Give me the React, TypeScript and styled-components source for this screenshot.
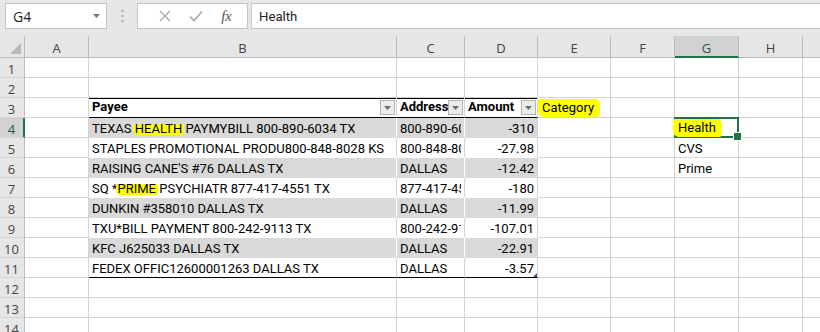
import React from "react";
import styled, { createGlobalStyle, css } from "styled-components";

const GlobalStyle = createGlobalStyle`
  html, body { margin: 0; padding: 0; }
  body { background: #e6e6e6; overflow: hidden; }
  * { box-sizing: border-box; }
`;

const GRID_LINE = "#d4d4d4";
const HEAD_LINE = "#bcbcbc";
const GREEN = "#217346";
const BAND = "#d9d9d9";
const CELL_FONT = `"Roboto", "Liberation Sans", sans-serif`;

const Window = styled.div`
  width: 820px;
  height: 332px;
  overflow: hidden;
  background: #e6e6e6;
  display: flex;
  flex-direction: column;
`;

const FormulaBar = styled.div`
  height: 36px;
  flex: none;
  display: flex;
  align-items: flex-start;
  padding: 3px 0 0 5px;
`;

const NameBox = styled.div`
  width: 102px;
  height: 26px;
  background: #fff;
  border: 1px solid #c6c6c6;
  display: flex;
  align-items: center;
  justify-content: space-between;
  padding: 0 6px 0 7px;
  font-family: "Open Sans", "Noto Sans", sans-serif;
  font-size: 14px;
  color: #222;
`;

const Grip = styled.div`
  width: 30px;
  height: 26px;
  display: flex;
  align-items: center;
  justify-content: center;
`;

const FxButtons = styled.div`
  width: 111px;
  height: 26px;
  background: #fff;
  border: 1px solid #c6c6c6;
  display: flex;
  align-items: center;
  padding: 0 8px 0 14px;
`;

const FxIconSlot = styled.div<{ $w: number }>`
  width: ${(p) => p.$w}px;
  height: 24px;
  display: flex;
  align-items: center;
  justify-content: center;
`;

const FxLabel = styled.span`
  font-family: "Liberation Serif", "DejaVu Serif", serif;
  font-style: italic;
  font-size: 15px;
  color: #555;
  letter-spacing: -0.5px;
`;

const FormulaInput = styled.div`
  flex: 1;
  height: 26px;
  margin-left: 3px;
  background: #fff;
  border: 1px solid #c6c6c6;
  border-right: none;
  display: flex;
  align-items: center;
  padding-left: 7px;
  font-family: ${CELL_FONT};
  font-size: 13.2px;
  color: #222;
`;

const Sheet = styled.div`
  flex: 1;
  display: grid;
  grid-template-columns: 25px 64px 308px 68px 73px 73px 64px 64px 64px 64px;
  grid-auto-rows: 20px;
  grid-template-rows: 22px;
  background: #fff;
  overflow: hidden;
`;

const Corner = styled.div`
  background: #e6e6e6;
  border-right: 1px solid ${HEAD_LINE};
  border-bottom: 1px solid ${HEAD_LINE};
  display: flex;
  align-items: flex-end;
  justify-content: flex-end;
  padding: 0 3px 3px 0;
`;

const ColHead = styled.div<{ $active?: boolean }>`
  background: ${(p) => (p.$active ? "#d2d2d2" : "#e6e6e6")};
  border-right: 1px solid ${HEAD_LINE};
  border-bottom: ${(p) => (p.$active ? `2px solid ${GREEN}` : `1px solid ${HEAD_LINE}`)};
  display: flex;
  align-items: center;
  justify-content: center;
  font-family: "Open Sans", "Noto Sans", sans-serif;
  font-size: 13px;
  color: ${(p) => (p.$active ? "#1f5f3a" : "#444")};
  padding-top: ${(p) => (p.$active ? "3px" : "2px")};
`;

const RowHead = styled.div<{ $active?: boolean }>`
  background: ${(p) => (p.$active ? "#d2d2d2" : "#e6e6e6")};
  border-right: ${(p) => (p.$active ? `2px solid ${GREEN}` : `1px solid ${HEAD_LINE}`)};
  border-bottom: 1px solid ${GRID_LINE};
  display: flex;
  align-items: center;
  justify-content: center;
  font-family: "Open Sans", "Noto Sans", sans-serif;
  font-size: 13px;
  color: ${(p) => (p.$active ? "#1f5f3a" : "#444")};
  padding: 2px ${(p) => (p.$active ? "0" : "1px")} 0 0;
`;

type Tone = "plain" | "band" | "white";

const Cell = styled.div<{
  $tone?: Tone;
  $right?: boolean;
  $bold?: boolean;
  $head?: boolean;
  $tableEdge?: boolean;
  $last?: boolean;
  $selected?: boolean;
}>`
  position: relative;
  min-width: 0;
  display: flex;
  align-items: flex-end;
  justify-content: ${(p) => (p.$right ? "flex-end" : "flex-start")};
  padding: 0 3px 0 3px;
  font-family: ${CELL_FONT};
  font-size: 13px;
  line-height: 16px;
  color: #000;
  font-weight: ${(p) => (p.$bold ? 700 : 400)};
  white-space: nowrap;
  overflow: hidden;
  background: ${(p) => (p.$tone === "band" ? BAND : "#fff")};
  border-right: 1px solid
    ${(p) => (p.$tone === "band" && !p.$tableEdge ? "#fff" : GRID_LINE)};
  border-bottom: 1px solid
    ${(p) =>
      p.$last || p.$head
        ? "#000"
        : p.$tone === "band"
        ? BAND
        : p.$tone === "white"
        ? "#fff"
        : GRID_LINE};
  ${(p) =>
    p.$head &&
    css`
      box-shadow: inset 0 1px 0 #000;
      padding: 0 1px 1px 3px;
    `}
  ${(p) =>
    p.$selected &&
    css`
      overflow: visible;
      &::before {
        content: "";
        position: absolute;
        left: -1px;
        top: -1px;
        right: -1px;
        bottom: -1px;
        border: 2px solid ${GREEN};
        pointer-events: none;
        z-index: 2;
      }
      &::after {
        content: "";
        position: absolute;
        right: -4px;
        bottom: -4px;
        width: 7px;
        height: 7px;
        background: ${GREEN};
        border: 1px solid #fff;
        z-index: 3;
      }
    `}
`;

const CellText = styled.span`
  flex: 1;
  min-width: 0;
  overflow: hidden;
`;

const HeadText = styled.span`
  flex: 1;
  min-width: 0;
  overflow: hidden;
  margin-right: -4px;
  padding-bottom: 1px;
`;

const FilterButton = styled.div`
  position: relative;
  z-index: 1;
  flex: none;
  width: 15px;
  height: 15px;
  margin-bottom: 1px;
  background: #ececec;
  border: 1px solid #b3b3b3;
  display: flex;
  align-items: center;
  justify-content: center;
`;

const Marker = styled.span<{ $tall?: boolean }>`
  background: linear-gradient(
    to bottom,
    transparent ${(p) => (p.$tall ? "0%" : "18%")},
    #ffff00 ${(p) => (p.$tall ? "0%" : "18%")},
    #ffff00 ${(p) => (p.$tall ? "100%" : "90%")},
    transparent ${(p) => (p.$tall ? "100%" : "90%")}
  );
  border-radius: 2px 5px 3px 6px;
  padding: 0 2px;
  margin: 0 -2px;
`;

const CategoryMarker = styled(Marker)`
  padding: 1px 6px 1px 4px;
  margin: 0;
`;

const CellMarker = styled(Marker)`
  position: relative;
  z-index: 3;
  padding: 1px 6px 1px 5px;
  margin: 0 0 0 -5px;
`;

const ResizeTick = styled.div`
  position: absolute;
  right: 0;
  bottom: 0;
  width: 0;
  height: 0;
  border-left: 4px solid transparent;
  border-bottom: 4px solid #4b4fa8;
`;

const CategoryCell = styled(Cell)`
  padding-left: 0;
  padding-bottom: 0;
`;

const ArrowDown = ({ color = "#6f6f6f", w = 7 }: { color?: string; w?: number }) => (
  <svg width={w} height={4} viewBox="0 0 7 4">
    <path d="M0 0 L7 0 L3.5 4 Z" fill={color} />
  </svg>
);

const SelectAllTriangle = () => (
  <svg width="11" height="11" viewBox="0 0 11 11">
    <path d="M11 0 L11 11 L0 11 Z" fill="#b8b8b8" />
  </svg>
);

type Row = { payee: React.ReactNode; addr: string; amt: string };

const rows: Row[] = [
  {
    payee: (
      <>
        TEXAS <Marker>HEALTH</Marker> PAYMYBILL 800-890-6034 TX
      </>
    ),
    addr: "800-890-6034",
    amt: "-310",
  },
  { payee: "STAPLES PROMOTIONAL PRODU800-848-8028 KS", addr: "800-848-8028", amt: "-27.98" },
  { payee: "RAISING CANE'S #76 DALLAS TX", addr: "DALLAS", amt: "-12.42" },
  {
    payee: (
      <>
        SQ *<Marker>PRIME</Marker> PSYCHIATR 877-417-4551 TX
      </>
    ),
    addr: "877-417-4551",
    amt: "-180",
  },
  { payee: "DUNKIN #358010 DALLAS TX", addr: "DALLAS", amt: "-11.99" },
  { payee: "TXU*BILL PAYMENT 800-242-9113 TX", addr: "800-242-9113", amt: "-107.01" },
  { payee: "KFC J625033 DALLAS TX", addr: "DALLAS", amt: "-22.91" },
  { payee: "FEDEX OFFIC12600001263 DALLAS TX", addr: "DALLAS", amt: "-3.57" },
];

const gValues: Record<number, React.ReactNode> = {
  4: <CellMarker $tall>Health</CellMarker>,
  5: "CVS",
  6: "Prime",
};

// Column I lies mostly past the window's right edge; its letter is off-screen.
const COLS = ["A", "B", "C", "D", "E", "F", "G", "H", ""];

export default function App() {
  const sheetRows: React.ReactNode[] = [];
  for (let r = 1; r <= 14; r++) {
    const cells: React.ReactNode[] = [];
    cells.push(
      <RowHead key="h" $active={r === 4}>
        {r}
      </RowHead>
    );
    cells.push(<Cell key="A" />);
    if (r === 3) {
      cells.push(
        <Cell key="B" $head $bold>
          <HeadText>Payee</HeadText>
          <FilterButton>
            <ArrowDown />
          </FilterButton>
        </Cell>,
        <Cell key="C" $head $bold>
          <HeadText>Address</HeadText>
          <FilterButton>
            <ArrowDown />
          </FilterButton>
        </Cell>,
        <Cell key="D" $head $bold $tableEdge>
          <HeadText>Amount</HeadText>
          <FilterButton>
            <ArrowDown />
          </FilterButton>
        </Cell>,
        <CategoryCell key="E">
          <CategoryMarker $tall>Category</CategoryMarker>
        </CategoryCell>
      );
    } else if (r >= 4 && r <= 11) {
      const d = rows[r - 4];
      const tone: Tone = r % 2 === 0 ? "band" : "white";
      const last = r === 11;
      cells.push(
        <Cell key="B" $tone={tone} $last={last}>
          <CellText>{d.payee}</CellText>
        </Cell>,
        <Cell key="C" $tone={tone} $last={last}>
          <CellText>{d.addr}</CellText>
        </Cell>,
        <Cell key="D" $tone={tone} $last={last} $right $tableEdge>
          {d.amt}
          {last && <ResizeTick />}
        </Cell>,
        <Cell key="E" />
      );
    } else {
      cells.push(<Cell key="B" />, <Cell key="C" />, <Cell key="D" />, <Cell key="E" />);
    }
    cells.push(<Cell key="F" />);
    cells.push(
      <Cell key="G" $selected={r === 4}>
        {gValues[r] ?? null}
      </Cell>
    );
    cells.push(<Cell key="H" />, <Cell key="I" />);
    sheetRows.push(<React.Fragment key={r}>{cells}</React.Fragment>);
  }

  return (
    <>
      <GlobalStyle />
      <Window>
        <FormulaBar>
          <NameBox>
            <span>G4</span>
            <ArrowDown color="#777" w={7} />
          </NameBox>
          <Grip>
            <svg width="3" height="12" viewBox="0 0 3 12">
              <rect x="0.5" y="0" width="2" height="2" fill="#a8a8a8" />
              <rect x="0.5" y="5" width="2" height="2" fill="#a8a8a8" />
              <rect x="0.5" y="10" width="2" height="2" fill="#a8a8a8" />
            </svg>
          </Grip>
          <FxButtons>
            <FxIconSlot $w={26}>
              <svg width="12" height="12" viewBox="0 0 12 12">
                <path d="M1 1 L11 11 M11 1 L1 11" stroke="#a9a9a9" strokeWidth="1.4" />
              </svg>
            </FxIconSlot>
            <FxIconSlot $w={36}>
              <svg width="14" height="12" viewBox="0 0 14 12">
                <path d="M1 6.5 L5 10.5 L13 1.5" stroke="#a9a9a9" strokeWidth="1.6" fill="none" />
              </svg>
            </FxIconSlot>
            <FxIconSlot $w={26}>
              <FxLabel>fx</FxLabel>
            </FxIconSlot>
          </FxButtons>
          <FormulaInput>Health</FormulaInput>
        </FormulaBar>
        <Sheet>
          <Corner>
            <SelectAllTriangle />
          </Corner>
          {COLS.map((c, i) => (
            <ColHead key={i} $active={c === "G"}>
              {c}
            </ColHead>
          ))}
          {sheetRows}
        </Sheet>
      </Window>
    </>
  );
}
